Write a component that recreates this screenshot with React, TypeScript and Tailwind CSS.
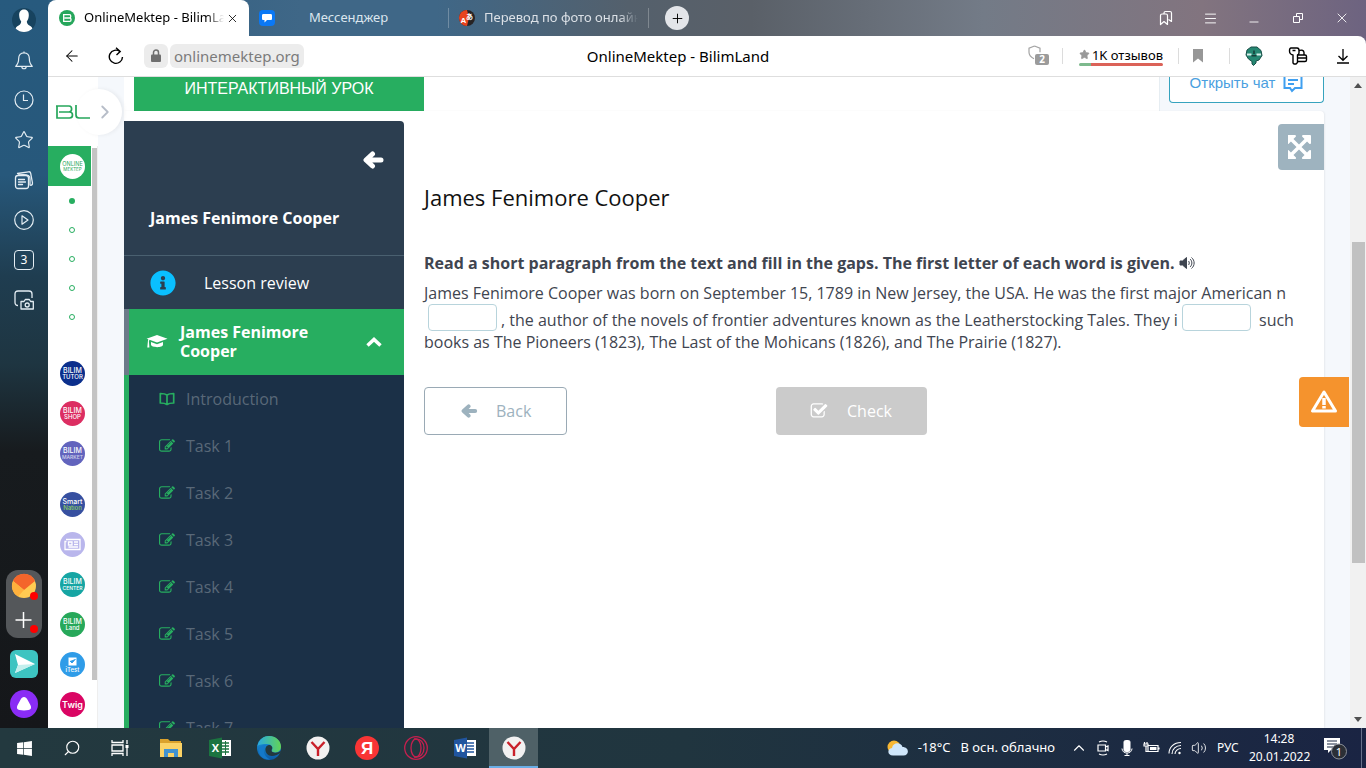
import React from "react";
import { Bell, Clock, Star, Lock, ArrowLeft, RotateCw, X, Plus, Menu, Minus, Bookmark, Search, ChevronUp, ChevronRight, Volume2 } from "lucide-react";
import { FaWindows, FaInfoCircle } from "react-icons/fa";

const SITE = "font-['Open_Sans','Liberation_Sans',sans-serif]";

const EDIT_PATH =
  "M888 1184l116-116-152-152-116 116v56h96v96h56zm440-720q-16-16-33 1l-350 350q-17 17-1 33t33-1l350-350q17-17 1-33zm80 594v190q0 119-84.5 203.5t-203.5 84.5h-832q-119 0-203.5-84.5t-84.5-203.5v-832q0-119 84.5-203.5t203.5-84.5h832q63 0 117 25 15 7 18 23 3 17-9 29l-49 49q-14 14-32 8-23-6-45-6h-832q-66 0-113 47t-47 113v832q0 66 47 113t113 47h832q66 0 113-47t47-113v-126q0-13 9-22l64-64q15-15 35-7t20 29zm-96-738l288 288-672 672h-288v-288zm444 132l-92 92-288-288 92-92q28-28 68-28t68 28l152 152q28 28 28 68t-28 68z";
const CHECK_PATH =
  "M1472 930v318q0 119-84.5 203.5t-203.5 84.5h-832q-119 0-203.5-84.5t-84.5-203.5v-832q0-119 84.5-203.5t203.5-84.5h832q63 0 117 25 15 7 18 23 3 17-9 29l-49 49q-10 10-23 10-3 0-9-2-23-6-45-6h-832q-66 0-113 47t-47 113v832q0 66 47 113t113 47h832q66 0 113-47t47-113v-254q0-13 9-22l64-64q10-10 23-10 6 0 12 3 20 8 20 29zm231-489l-814 814q-24 24-57 24t-57-24l-430-430q-24-24-24-57t24-57l110-110q24-24 57-24t57 24l263 263 647-647q24-24 57-24t57 24l110 110q24 24 24 57t-24 57z";
const EXPAND_PATH =
  "M1283 413l-355 355 355 355 144-144q29-31 70-14 39 17 39 59v448q0 26-19 45t-45 19h-448q-42 0-59-40-17-39 14-69l144-144-355-355-355 355 144 144q31 30 14 69-17 40-59 40h-448q-26 0-45-19t-19-45v-448q0-42 40-59 39-17 69 14l144 144 355-355-355-355-144 144q-19 19-45 19-12 0-24-5-40-17-40-59v-448q0-26 19-45t45-19h448q42 0 59 40 17 39-14 69l-144 144 355 355 355-355-144-144q-31-30-14-69 17-40 59-40h448q26 0 45 19t19 45v448q0 42-39 59-13 5-25 5-26 0-45-19z";

function Glyph({ d, className, box = "0 0 1792 1792" }: { d: string; className: string; box?: string }) {
  return (
    <svg viewBox={box} className={className} fill="currentColor" aria-hidden="true">
      <path d={d} />
    </svg>
  );
}

function BoldArrow({ className }: { className: string }) {
  return (
    <svg viewBox="0 0 22 18" className={className} fill="none" stroke="currentColor" strokeWidth="5" strokeLinecap="round" strokeLinejoin="round" aria-hidden="true">
      <path d="M10.500 3L4 9l6.500 6M5 9h14" />
    </svg>
  );
}

function RailButton({ label, children }: { label: string; children: React.ReactNode }) {
  return (
    <button type="button" aria-label={label} className="flex h-10 w-12 shrink-0 items-center justify-center">
      {children}
    </button>
  );
}

function DesktopRail() {
  const line = "size-5 text-[#e4edf3]";
  return (
    <nav aria-label="Browser panel" className="flex w-12 shrink-0 flex-col items-center text-white">
      <RailButton label="Profile">
        <svg viewBox="0 0 24 24" className="size-6">
          <circle cx="12" cy="12" r="12" fill="#17435f" />
          <path d="M12 1.500c3.300 0 5 2.500 4.800 6-.1 2.500-.9 4.500-2 6 .2 2 .8 3 2.600 3.900 2 .9 2.700 1.800 2.900 3.300C18 22.700 15 24 12 24s-6-1.300-8.300-3.300c.2-1.500.9-2.400 2.900-3.300 1.800-.9 2.400-1.900 2.600-3.900-1.100-1.500-1.900-3.500-2-6-.2-3.500 1.500-6 4.800-6z" fill="#fff" />
        </svg>
      </RailButton>
      <RailButton label="Notifications">
        <svg viewBox="0 0 20 20" className={line} fill="none" stroke="currentColor" strokeWidth="1.200" strokeLinejoin="round">
          <path d="M10 1.500v1.300M10 2.800c-3.500 0-5.300 2.400-5.300 5.500 0 4.500-1 6-3 8h16.600c-2-2-3-3.500-3-8 0-3.100-1.800-5.500-5.300-5.500zM7.800 16.500c0 3 4.400 3 4.400 0" />
        </svg>
      </RailButton>
      <RailButton label="History">
        <svg viewBox="0 0 20 20" className={line} fill="none" stroke="currentColor" strokeWidth="1.200">
          <circle cx="10" cy="10" r="9" /><path d="M9.500 4.500V10.500h4.500" />
        </svg>
      </RailButton>
      <RailButton label="Favourites"><Star className={line} strokeWidth={1.4} /></RailButton>
      <RailButton label="Collections">
        <svg viewBox="0 0 20 20" className={line} fill="none" stroke="currentColor" strokeWidth="1.300" strokeLinecap="round">
          <rect x="1.500" y="5.500" width="13" height="13" rx="2.500" />
          <path d="M4.500 9.500h6M4.500 12h7M4.500 14.500h4M3.500 3.500l11-1.700c1.200-.2 2 .4 2.200 1.500L18.500 13c.2 1.300-.3 2-1.500 2.300M4.500 5c5-.5 8-.3 10 .5 1.500.6 1.500 2 1.500 3.500v6" />
        </svg>
      </RailButton>
      <RailButton label="Video">
        <svg viewBox="0 0 20 20" className={line} fill="none" stroke="currentColor" strokeWidth="1.200" strokeLinejoin="round">
          <circle cx="10" cy="10" r="9.300" />
          <path d="M8 5.800v8.400l6-4.200z" />
        </svg>
      </RailButton>
      <RailButton label="Open tabs">
        <span className="flex size-5 items-center justify-center rounded border border-[#e4edf3] text-xs">3</span>
      </RailButton>
      <RailButton label="Screenshot">
        <svg viewBox="0 0 20 20" className={line} fill="none" stroke="currentColor" strokeWidth="1.300" strokeLinejoin="round">
          <path d="M4 15.500c-1.800 0-3-1-3-3V4c0-2 1-3 3-3h11c2 0 3 1 3 3v4" />
          <path d="M7 11.500h3l1.300-2h4l1.300 2H19.300V19H7z" />
          <circle cx="13.200" cy="15" r="2" />
        </svg>
      </RailButton>
      <div className="mt-auto flex flex-col items-center pb-1">
        <div className="mb-1.5 flex h-[68px] w-9 flex-col items-center justify-around rounded-xl bg-[#54575a]">
          <svg viewBox="0 0 28 28" className="size-7">
            <circle cx="14" cy="13" r="12" fill="#ffcb52" />
            <path d="M3 8A12 12 0 0 1 25 8L14 17z" fill="#f4652b" />
            <path d="M3 8l11 9-6 6.500A12 12 0 0 1 3 8z" fill="#ffb13d" />
            <circle cx="24" cy="23" r="4" fill="#f00" />
          </svg>
          <svg viewBox="0 0 28 28" className="size-7">
            <path d="M13.500 5v16M5.500 13h16" stroke="#fff" strokeWidth="1.500" />
            <circle cx="24" cy="22" r="4" fill="#f00" />
          </svg>
        </div>
        <RailButton label="Send">
          <svg viewBox="0 0 28 28" className="size-7">
            <rect width="28" height="28" rx="6" fill="#3dc4c1" />
            <path d="M5 4l20 10L5 23l3-8z" fill="#fff" />
            <path d="M8 15l17-1L5 23z" fill="#c3efed" />
          </svg>
        </RailButton>
        <RailButton label="Alice">
          <svg viewBox="0 0 28 28" className="size-7">
            <circle cx="14" cy="14" r="14" fill="#8a2cf5" />
            <path d="M14 7c1.500 0 2.500 1 3.500 2.700l3 5.500c1.300 2.500.4 4.300-2 4.800-2.500.6-6.500.6-9 0-2.400-.5-3.300-2.300-2-4.800l3-5.500C11.500 8 12.500 7 14 7z" fill="#fff" />
          </svg>
        </RailButton>
      </div>
    </nav>
  );
}

function TabBar() {
  const win = "flex w-11 items-center justify-center text-white";
  return (
    <header className="flex h-9 shrink-0 text-[13px]">
      <div className="flex w-[201px] items-center rounded-t-lg bg-white pl-[11px] pr-[9px]">
        <svg viewBox="0 0 16 16" className="size-4 shrink-0">
          <circle cx="8" cy="8" r="8" fill="#26a65b" />
          <path d="M4 4.700h6.500c1.700 0 1.700 3.300 0 3.300H5.500M4.700 4.700v6.600h6c1.800 0 1.800-3.300 0-3.300" fill="none" stroke="#fff" strokeWidth="1.300" />
        </svg>
        <span className="ml-[9px] min-w-0 flex-1 overflow-hidden whitespace-nowrap [mask-image:linear-gradient(to_right,#000_88%,transparent)]">OnlineMektep - BilimLand</span>
        <button type="button" aria-label="Close tab" className="flex w-4 justify-center"><X size={13} strokeWidth={1.5} /></button>
      </div>
      <div className="flex w-[199px] items-center pl-[10px] text-[#dbe6ee]">
        <svg viewBox="0 0 16 16" className="size-4 shrink-0">
          <rect width="16" height="16" rx="4" fill="#0a78f5" />
          <path d="M4.500 4h7c1 0 1.500.5 1.500 1.500v3c0 1-.5 1.500-1.500 1.500H8l-2.500 2.500V10h-1C3.500 10 3 9.500 3 8.500v-3C3 4.500 3.500 4 4.500 4z" fill="#fff" />
        </svg>
        <span className="flex-1 pr-[26px] text-center">Мессенджер</span>
      </div>
      <div className="my-2 flex w-[201px] items-center border-x border-white/25 pl-[10px] pr-2.5 text-[#dbe0e6]">
        <svg viewBox="0 0 16 16" className="size-4 shrink-0">
          <circle cx="8" cy="8" r="8" fill="#272324" />
          <path d="M8 0a8 8 0 0 0 0 16l2-8z" fill="#e8431f" />
          <text x="1.500" y="13" fontSize="8" fontWeight="700" fill="#fff" fontFamily="Liberation Sans">A</text>
          <text x="7" y="8.500" fontSize="7" fontWeight="700" fill="#fff" fontFamily="Noto Sans CJK JP">あ</text>
        </svg>
        <span className="ml-[9px] min-w-0 flex-1 overflow-hidden whitespace-nowrap [mask-image:linear-gradient(to_right,#000_88%,transparent)]">Перевод по фото онлайн</span>
      </div>
      <button type="button" aria-label="New tab" className="ml-4 flex size-6 items-center justify-center self-center rounded-full bg-[#e3e5e9]">
        <Plus size={15} strokeWidth={1.5} />
      </button>
      <div className="ml-auto flex pr-0.5">
        <button type="button" aria-label="Bookmarks" className={win}>
          <svg viewBox="0 0 16 16" className="size-4" fill="none" stroke="currentColor" strokeWidth="1.200" strokeLinejoin="round">
            <path d="M2.500 5.500c0-1 .5-1.500 1.500-1.500h4c1 0 1.500.5 1.500 1.500v9L6 11.500l-3.500 3zM6 4V3c0-1 .5-1.500 1.500-1.500h4.500c1 0 1.500.5 1.500 1.500v8.500l-3-2" />
          </svg>
        </button>
        <button type="button" aria-label="Menu" className={win}><Menu size={15} strokeWidth={1.5} /></button>
        <button type="button" aria-label="Minimize" className={`${win} pt-2`}><Minus size={14} strokeWidth={1.5} /></button>
        <button type="button" aria-label="Restore" className={win}>
          <svg viewBox="0 0 12 12" className="size-3" fill="none" stroke="currentColor"><path d="M1.500 4.500h6v6h-6zM4.500 4V1.500h6v6H8" /></svg>
        </button>
        <button type="button" aria-label="Close" className={win}><X size={16} strokeWidth={1.3} /></button>
      </div>
    </header>
  );
}

function Toolbar() {
  const cell = "flex w-11 items-center justify-center";
  return (
    <div className="flex h-[41px] shrink-0 items-center rounded-tr-lg border-b border-[#dedede] bg-white text-base text-black">
      <div className="flex w-[280px] shrink-0 items-center pl-0.5">
        <button type="button" aria-label="Back" className={cell}><ArrowLeft size={18} strokeWidth={1.4} /></button>
        <button type="button" aria-label="Reload" className={cell}>
          <svg viewBox="0 0 16 18" className="h-[18px] w-4" fill="none" stroke="currentColor" strokeWidth="1.400">
            <path d="M14.500 10A6.600 6.600 0 1 1 12 4.600M8 .8l4.200 3.700L8.500 8" />
          </svg>
        </button>
        <span className="ml-1.5 flex h-6 w-6 items-center justify-center rounded-md bg-[#ececec]">
          <svg viewBox="0 0 12 14" className="h-3.5 w-3"><rect x="1" y="5.500" width="10" height="7.500" rx="1" fill="#6f6f6f" /><path d="M3.500 6V3.500a2.500 2.500 0 0 1 5 0V6" fill="none" stroke="#6f6f6f" strokeWidth="1.500" /></svg>
        </span>
        <span className="ml-0.5 flex h-6 items-center rounded-md bg-[#ececec] px-1 text-[15px] text-[#7b7b7b]">onlinemektep.org</span>
      </div>
      <div className="min-w-0 flex-1 text-center text-[15px]">OnlineMektep - BilimLand</div>
      <div className="flex h-full shrink-0 items-center">
        <svg viewBox="0 0 22 22" className="mr-3 size-[22px]">
          <path d="M6.500 1l5.500 2.200v4M6.500 1L1 3.200v4c0 3 2 5 5 6.500" fill="none" stroke="#a3a3a3" strokeWidth="1.200" />
          <rect x="7" y="9" width="14" height="11" rx="2" fill="#9b9b9b" />
          <text x="14" y="18" fontSize="10" fontWeight="700" fill="#fff" textAnchor="middle" fontFamily="Open Sans">2</text>
        </svg>
        <div className="flex h-4 items-center border-l border-[#dcdcdc] pl-4 pr-[15px]">
          <div className="flex w-[84px] flex-col text-[13px] leading-4">
            <span className="flex items-center justify-center gap-0.5 whitespace-nowrap"><Star size={11} className="fill-[#999] text-[#999]" />1K отзывов</span>
            <span className="flex h-[3px] overflow-hidden rounded"><i className="w-3 bg-[#7db98d]" /><i className="flex-1 bg-[#db6258]" /></span>
          </div>
        </div>
        <div className="flex h-4 w-[52px] items-center border-x border-[#dcdcdc] pl-3">
          <svg viewBox="0 0 14 14" className="size-3.5"><path d="M2 0h10v13.500L7 9.500l-5 4z" fill="#979797" /></svg>
        </div>
        <button type="button" aria-label="Extension" className="ml-0.5 flex w-11 items-center justify-center">
          <svg viewBox="0 0 18 20" className="h-5 w-[18px]">
            <path d="M6 1h6l4 3.500 1 5-3 4.500-3 1v2l-2.500 2.500L7 18v-2.500L3.500 13 1 9l1-5z" fill="#258772" stroke="#1a4f48" />
            <path d="M2 7.500h4.500v2H2zM11.500 7.500H16v2h-4.500z" fill="#d6efe9" /><path d="M8.200 4.500h1.600V8H8.200zM6.500 9h5v1.500h-5z" fill="#173f3a" />
          </svg>
        </button>
        <button type="button" aria-label="Passwords" className={cell}>
          <svg viewBox="0 0 20 20" className="size-5" fill="none" stroke="currentColor" strokeWidth="1.400" strokeLinejoin="round">
            <path d="M3 2h6c1.500 0 2 1 2 2.500V7c0 1-.5 1.500-1.500 2v7.500L8 18H6l-1-1V9C2.500 8.500 1.500 7 1.500 5c0-2 .5-3 1.500-3zM4.500 4.500h3M11 5c1.500-1.500 5-1 5 1.500V9M9.500 9H17c1 0 1.500.5 1.500 1.500V14c0 1-.5 1.500-1.500 1.500H9.500M9.500 12H18" />
          </svg>
        </button>
        <button type="button" aria-label="Downloads" className="flex w-[46px] items-center justify-center">
          <svg viewBox="0 0 14 16" className="h-4 w-3.5" fill="none" stroke="currentColor" strokeWidth="1.300"><path d="M7 1v11M2.500 8L7 12.300 11.500 8M1 15h12" /></svg>
        </button>
      </div>
    </div>
  );
}

const services = [
  { top: "BILIM", bottom: "TUTOR", tint: "bg-[#0b2f8c]", bottomTint: "text-white" },
  { top: "BILIM", bottom: "SHOP", tint: "bg-[#dc2e62]", bottomTint: "text-white" },
  { top: "BILIM", bottom: "MARKET", tint: "bg-[#6264bd]", bottomTint: "text-white/70" },
  { top: "Smart", bottom: "Nation", tint: "bg-[#3750a0]", bottomTint: "text-[#8ed05e]" },
  { top: "", bottom: "", tint: "bg-[#b9b6ec]", bottomTint: "", icon: "news" },
  { top: "BILIM", bottom: "CENTER", tint: "bg-[#16a5a3]", bottomTint: "text-white" },
  { top: "BILIM", bottom: "Land", tint: "bg-[#27a85a]", bottomTint: "text-white" },
  { top: "", bottom: "iTest", tint: "bg-[#2f9ce8]", bottomTint: "text-white", icon: "test" },
  { top: "Twig", bottom: "", tint: "bg-[#da0563]", bottomTint: "", big: true },
];

function ServiceLink({ item }: { item: (typeof services)[number] }) {
  return (
    <a href="#service" aria-label={`${item.top} ${item.bottom}`} className="flex h-10 shrink-0 items-center justify-center pl-[5px]">
      <svg viewBox="0 0 25 25" className={`size-[25px] rounded-full ${item.tint}`} fontFamily="Inter, sans-serif" textAnchor="middle">
        {item.icon === "news" && <path d="M6 7.500h14v10H5v-8h1.500M8.500 10h3.500v3H8.500zM14 10h4M14 12.500h4M8.500 15h9.500" fill="none" stroke="#fff" strokeWidth="1.300" />}
        {item.icon === "test" && <path d="M8 5h9v9H8zM10 9l2 2 3.500-4" fill="#fff" stroke="#2f9ce8" />}
        {item.big ? (
          <text x="12.500" y="16" fontSize="9" fontWeight="600" fill="#fff">Twig</text>
        ) : (
          <>
            {item.top && <text x="12.500" y="12" fontSize="7" fontWeight="500" fill="#fff">{item.top}</text>}
            {item.bottom && <text x="12.500" y={item.icon ? 20 : 18} fontSize={item.bottom.length > 5 && item.top === "BILIM" ? 5 : 6} fontWeight="500" fill="currentColor" className={item.bottomTint}>{item.bottom}</text>}
          </>
        )}
      </svg>
    </a>
  );
}

function SiteRail() {
  return (
    <aside className="relative z-10 flex w-[50px] shrink-0 flex-col bg-white">
      <button type="button" aria-label="Expand menu" className="absolute left-7 top-3 flex size-[46px] items-center justify-end rounded-full bg-white pr-1.5 shadow-[2px_0_4px_rgba(0,0,0,0.06)]">
        <ChevronRight size={22} strokeWidth={2} className="text-[#b7bdc8]" />
      </button>
      <a href="#home" aria-label="BilimLand" className="relative flex h-[69px] shrink-0 items-center pl-2">
        <svg viewBox="0 0 34 14" className="h-3.5 w-[34px]" fill="none" stroke="#26a65b" strokeWidth="1.700">
          <path d="M0 1h13c3.500 0 3.500 6 0 6H3M1 1v12h12.500c4 0 4-6 0-6M20 0v10c0 2 1 3 3 3h11" />
        </svg>
      </a>
      <div className="flex min-h-0 flex-1 overflow-hidden">
        <div className="w-[43px] shrink-0">
          <a href="#mektep" aria-label="OnlineMektep" className="flex h-10 items-center justify-center bg-[#27ae60] pl-[5px]">
            <svg viewBox="0 0 25 25" className="size-[25px] rounded-full bg-white" fontFamily="Inter, sans-serif" textAnchor="middle" fill="#26a65b">
              <text x="12.500" y="12" fontSize="5.500">ONLINE</text>
              <text x="12.500" y="17" fontSize="4.500">MEKTEP</text>
            </svg>
          </a>
          {[0, 1, 2, 3, 4].map((n) => (
            <div key={n} className="flex h-[29px] items-center justify-center pl-[5px]">
              <span className={n === 0 ? "size-1.5 rounded-full bg-[#27ae60]" : "size-1.5 rounded-full border border-[#27ae60]"} />
            </div>
          ))}
          <div className="pt-[22px]">{services.slice(0, 3).map((s) => <ServiceLink key={s.bottom} item={s} />)}</div>
          <div className="pt-[11px]">{services.slice(3).map((s) => <ServiceLink key={s.top + s.bottom} item={s} />)}</div>
        </div>
        <div className="ml-px flex-1 border-r border-[#eee]"><div className="mt-0.5 h-[532px] w-[5px] bg-[#c4c4c4]" /></div>
      </div>
    </aside>
  );
}

function LessonMenu() {
  return (
    <nav aria-label="Lesson" className="flex w-[280px] shrink-0 flex-col self-stretch rounded-tr bg-[#2c3e50] text-base text-white">
      <div className="flex shrink-0 justify-end px-5 pt-[30px]">
        <button type="button" aria-label="Collapse"><BoldArrow className="h-[18px] w-[22px]" /></button>
      </div>
      <h2 className="mt-[38px] shrink-0 border-b border-[#4a6070] pb-[26px] pl-[26px] leading-[22px] font-bold">James Fenimore Cooper</h2>
      <a href="#review" className="flex h-[53px] shrink-0 items-center pl-[26px]">
        <FaInfoCircle className="size-[26px] text-[#0abfff]" />
        <span className="ml-7">Lesson review</span>
      </a>
      <button type="button" className="flex h-[66px] shrink-0 items-center border-l-[5px] border-[#6c7a89] bg-[#27ae60] pl-[17px] pr-[22px] text-left leading-[19px] font-bold">
        <svg viewBox="0 0 22 16" className="h-4 w-[22px] shrink-0" fill="currentColor">
          <path d="M11 1l10.500 3.700L11 8.400 3.500 5.800l-.6 1.500.5 6.200H1.300l.6-6.200.4-2L.5 4.700zM5 8l6 2.200L17 8v2.800c0 3.200-11.500 3.200-12 0z" />
        </svg>
        <span className="ml-3 flex-1">James Fenimore<br />Cooper</span>
        <svg viewBox="0 0 16 10" className="h-2.5 w-4" fill="none" stroke="currentColor" strokeWidth="3.500"><path d="M1.500 8.500L8 2.500l6.500 6" /></svg>
      </button>
      <ul className="min-h-0 flex-1 overflow-hidden border-l-[5px] border-[#27ae60] bg-[#1b3047] text-[#596878]">
        {["Introduction", "Task 1", "Task 2", "Task 3", "Task 4", "Task 5", "Task 6", "Task 7"].map((t, i) => (
          <li key={t}>
            <a href="#task" className="flex h-[47px] items-center pl-[30px]">
              {i === 0 ? (
                <svg viewBox="0 0 16 14" className="h-3.5 w-4 text-[#27ae60]" fill="none" stroke="currentColor" strokeWidth="1.700" strokeLinejoin="round">
                  <path d="M8 3C6 1.500 4 1.500 1.300 1.500v9.500C4 11 6 11 8 12.500 10 11 12 11 14.700 11V1.500C12 1.500 10 1.500 8 3zM8 3v9.500" />
                </svg>
              ) : (
                <Glyph d={EDIT_PATH} className="size-4 text-[#27ae60]" />
              )}
              <span className="ml-[11px]">{t}</span>
            </a>
          </li>
        ))}
      </ul>
    </nav>
  );
}

function Gap({ label }: { label: string }) {
  return <input type="text" aria-label={label} className="mx-1 inline-block h-[27px] w-[69px] rounded border border-[#b8d4dc] bg-white px-1 align-bottom" />;
}

function Exercise() {
  return (
    <section className="min-w-0 flex-1 pl-5 pt-[3px] text-base text-[#3f4550]">
      <div className="flex justify-end">
        <button type="button" aria-label="Full screen" className="flex size-[46px] items-center justify-center rounded-l bg-[#9eb3bf] text-white">
          <Glyph d={EXPAND_PATH} className="size-[26px]" box="64 0 1664 1536" />
        </button>
      </div>
      <h1 className="mt-[11px] text-[22px] leading-8 text-[#111]">James Fenimore Cooper</h1>
      <p className="mt-[39px] flex items-center leading-[22px] font-bold">
        Read a short paragraph from the text and fill in the gaps. The first letter of each word is given.
        <button type="button" aria-label="Listen" className="ml-1">
          <svg viewBox="0 0 16 14" className="h-3.5 w-4" fill="none" stroke="currentColor">
            <path d="M1 5h2.500L7.500 1.500v11L3.500 9H1z" fill="currentColor" />
            <path d="M9.500 5c1 1 1 3 0 4M11 3c2.500 2 2.500 6 0 8M12.500 1.500c3.500 3 3.500 8 0 11" />
          </svg>
        </button>
      </p>
      <p className="mt-2 pr-[30px] leading-[22px]">
        James Fenimore Cooper was born on September 15, 1789 in New Jersey, the USA. He was the first major American n <Gap label="Word starting with n" />, the author of the novels of frontier adventures known as the Leatherstocking Tales. They i<Gap label="Word starting with i" /> such books as The Pioneers (1823), The Last of the Mohicans (1826), and The Prairie (1827).
      </p>
      <div className="mt-[34px] flex gap-[209px]">
        <button type="button" className="flex h-12 w-[143px] items-center rounded border border-[#9aaab5] pl-[35px] text-[#9db2be]">
          <BoldArrow className="h-3.5 w-[18px]" /><span className="ml-[18px]">Back</span>
        </button>
        <button type="button" className="flex h-12 w-[151px] items-center rounded bg-[#cbcbcb] pl-[34px] text-white">
          <Glyph d={CHECK_PATH} className="size-[18px]" /><span className="ml-[19px]">Check</span>
        </button>
      </div>
    </section>
  );
}

function Page() {
  return (
    <div className={`relative flex min-h-0 flex-1 overflow-hidden bg-[#f5f8fc] ${SITE}`}>
      <SiteRail />
      <main className="ml-[26px] mr-[26px] flex min-w-0 flex-1 flex-col">
        <div className="flex h-[34px] shrink-0">
          <div className="flex-1 bg-white pl-[10px]">
            <a href="#lesson" className="flex h-full w-[290px] items-start justify-center bg-[#27ae60] pt-0.5 font-['Liberation_Sans',Arial,sans-serif] text-base leading-5 text-white">ИНТЕРАКТИВНЫЙ УРОК</a>
          </div>
          <div className="w-[165px] border-l border-[#e6edf2] pl-[9px]">
            <button type="button" className="flex h-[26px] w-[155px] items-center justify-center gap-2 rounded-b border border-t-0 border-[#36a3be] bg-white pb-3 font-['Liberation_Sans',Arial,sans-serif] text-[15px] text-[#4a9fe0]">
              Открыть чат
              <svg viewBox="0 0 20 18" className="h-[18px] w-5" fill="none" stroke="#3f9ff0" strokeWidth="2"><path d="M1.500 0v13H7l2 3 3-3h6.500V0M5 5h10M5 9h6" /></svg>
            </button>
          </div>
        </div>
        <div className="flex min-h-0 flex-1 rounded-tr bg-white pt-[10px] shadow-[1px_0_2px_rgba(0,0,0,0.06)]">
          <LessonMenu />
          <Exercise />
        </div>
      </main>
      <button type="button" aria-label="Report a problem" className="absolute right-[17px] top-[300px] flex size-[50px] items-center justify-center rounded-l bg-[#f5932d]">
        <svg viewBox="0 0 28 26" className="h-[26px] w-7" fill="none" stroke="#fff" strokeWidth="3" strokeLinejoin="round"><path d="M14 3L2.500 22h23z" /><path d="M14 9v7M14 17v2.500" strokeWidth="3.500" /></svg>
      </button>
      <div className="flex w-4 shrink-0 flex-col items-center bg-[#f1f1f1]">
        <svg viewBox="0 0 8 5" className="mt-1.5 h-[5px] w-2"><path d="M4 0l4 5H0z" fill="#505050" /></svg>
        <div className="mt-[154px] h-[321px] w-[13px] bg-[#c1c1c1]" />
        <svg viewBox="0 0 8 5" className="mt-auto mb-1.5 h-[5px] w-2"><path d="M0 0h8L4 5z" fill="#505050" /></svg>
      </div>
    </div>
  );
}

function YBrowser() {
  return (
    <svg viewBox="0 0 24 24" className="size-6">
      <circle cx="12" cy="12" r="11.500" fill="#f2f1f1" />
      <path d="M5.500 6l6.500 7 6.500-7M12 12v8" fill="none" stroke="#c9202a" strokeWidth="2.400" />
    </svg>
  );
}

function Office({ letter, dark, light }: { letter: string; dark: string; light: string }) {
  return (
    <svg viewBox="0 0 24 24" className="size-6">
      <path d="M12 4h11v16H12z" fill="#fff" />
      <path d="M14 7h7M14 10h7M14 13h7M14 16h7" stroke={light} strokeWidth="1.300" />
      {letter === "X" && <path d="M17.500 5v14" stroke={light} />}
      <path d="M1 4l13-2.500v21L1 20z" fill={dark} />
      <text x="7.500" y="16" fontSize="11" fontWeight="700" fill="#fff" textAnchor="middle" fontFamily="Open Sans">{letter}</text>
    </svg>
  );
}

function Taskbar() {
  const cell = "flex h-10 w-[49px] items-center justify-center";
  const sys = "flex h-10 w-6 items-center justify-center";
  return (
    <footer className="flex h-10 shrink-0 items-center bg-linear-to-r from-[#23393f] via-[#20353f] to-[#1a2443] text-white">
      <button type="button" aria-label="Start" className="flex h-10 w-12 items-center justify-center"><FaWindows size={17} /></button>
      <button type="button" aria-label="Search" className="flex h-10 w-12 items-center justify-center"><Search size={18} strokeWidth={1.5} className="-scale-x-100" /></button>
      <button type="button" aria-label="Task view" className="mr-0.5 flex h-10 w-12 items-center justify-center">
        <svg viewBox="0 0 18 16" className="h-4 w-[18px]" fill="none" stroke="currentColor" strokeWidth="1.300"><path d="M1 0v2.500h11V0M1 5h11v6H1zM1 16v-2.500h11V16M16 0v4M16 8v8" /><path d="M14.500 5h3v3h-3z" fill="currentColor" stroke="none" /></svg>
      </button>
      <button type="button" aria-label="Explorer" className={cell}>
        <svg viewBox="0 0 24 24" className="size-6"><path d="M1 3h8l2 2h11v4H1z" fill="#dba22c" /><path d="M1 7h22v14H1z" fill="#fbd366" /><path d="M5 13h14v8h-4v-4H9v4H5z" fill="#4293d0" /></svg>
      </button>
      <button type="button" aria-label="Excel" className={cell}><Office letter="X" dark="#1b7440" light="#1b7440" /></button>
      <button type="button" aria-label="Edge" className={cell}>
        <svg viewBox="0 0 24 24" className="size-6">
          <defs>
            <linearGradient id="edgeTop"><stop offset="0" stopColor="#2aa9e0" /><stop offset="1" stopColor="#62d456" /></linearGradient>
            <linearGradient id="edgeLow" x2="0" y2="1"><stop offset="0" stopColor="#1b9de2" /><stop offset="1" stopColor="#0c59a4" /></linearGradient>
          </defs>
          <circle cx="12" cy="12" r="12" fill="url(#edgeLow)" />
          <path d="M.5 10C2 3 7 0 12 0c7 0 12 5 12 10.500 0 4-3 6-6 6-2.500 0-4-1-3-2.500 1.500-2.500-.5-6-5-6C6 8 2 8.500.5 10z" fill="url(#edgeTop)" />
          <path d="M9 11c-2 4 1 9 6 9 3 0 5-1 7.500-2.500 1-1 1.500-2 1.500-3-2 2-5 2.500-7 2-2.500-.5-3-2-2-3.500 1-2-1-4-3-4-1.500 0-2.500 1-3 2z" fill="#23393f" />
          <path d="M10 9C5 12 6 20 13 23.500 4 24 1 17 2 13c1-3 5-5 8-4z" fill="#1479c9" />
        </svg>
      </button>
      <button type="button" aria-label="Yandex Browser" className={cell}><YBrowser /></button>
      <button type="button" aria-label="Yandex" className={cell}>
        <svg viewBox="0 0 24 24" className="size-6"><circle cx="12" cy="12" r="12" fill="#f93535" /><text x="12" y="18" fontSize="17" fontWeight="700" fill="#fff" textAnchor="middle" fontFamily="Liberation Sans">Я</text></svg>
      </button>
      <button type="button" aria-label="Opera" className={cell}>
        <svg viewBox="0 0 24 24" className="size-6" fill="none" stroke="#c5204f" strokeWidth="1.300"><circle cx="12" cy="12" r="11.300" /><ellipse cx="12" cy="12" rx="5" ry="9" /><path d="M10 3c7-1 10 4 10 9s-3 10-10 9" /></svg>
      </button>
      <button type="button" aria-label="Word" className={cell}><Office letter="W" dark="#21559f" light="#21559f" /></button>
      <button type="button" aria-label="Yandex Browser window" className="flex h-10 w-[49px] items-center justify-center border-b-2 border-[#6aaee6] bg-[#4f6167] pt-0.5"><YBrowser /></button>

      <div className="ml-auto flex items-center text-[13px]">
        <svg viewBox="0 0 22 16" className="h-4 w-[22px]"><circle cx="7" cy="7" r="6.500" fill="#f7b733" /><path d="M6 15.500c-6 0-6-7-1-7.500 1-6 9-6 10.500-1 7 0 7 8.500 1 8.500z" fill="#cfe6fa" /></svg>
        <span className="ml-[9px] whitespace-nowrap">-18°C</span>
        <span className="ml-2.5 whitespace-nowrap">В осн. облачно</span>
        <button type="button" aria-label="Hidden icons" className="ml-3 flex h-10 w-6 items-center justify-center"><ChevronUp size={18} strokeWidth={1.5} /></button>
        <span className={sys}>
          <svg viewBox="0 0 14 16" className="h-4 w-3.5" fill="none" stroke="currentColor" strokeWidth="1.200"><path d="M2 5h7.500v6H2zM9.500 7l2.500-1v4.500l-2.500-1M3 2q4-2 8 0M3 14q4 2 8 0" /></svg>
        </span>
        <span className={sys}>
          <svg viewBox="0 0 12 16" className="h-4 w-3" fill="none" stroke="currentColor"><rect x="3" y=".5" width="6" height="11" rx="1.500" fill="currentColor" /><path d="M1 8.500c0 6 10 6 10 0M6 13v2.500M3.500 15.500h5" /></svg>
        </span>
        <span className={sys}>
          <svg viewBox="0 0 17 14" className="h-3.5 w-[17px]" fill="none" stroke="currentColor" strokeWidth="1.200"><path d="M5 4.500h10v6H5zM16 6.500v2M1.500 1v2M4 1v2M1 3h4v2H1zM3 5v5.500h2" /><path d="M7 6h6.500v3H7z" fill="currentColor" stroke="none" /></svg>
        </span>
        <span className={sys}>
          <svg viewBox="0 0 14 14" className="size-3.5" fill="none" stroke="currentColor" strokeWidth="1.100"><path d="M1 12.500C1 6 6 1.500 13 1.500M4 13c0-5 4-8.500 9-8.500M7 13c0-3 3-5.500 6-5.500" /><circle cx="11.500" cy="12" r="1.200" fill="currentColor" stroke="none" /></svg>
        </span>
        <span className={sys}><Volume2 size={16} strokeWidth={1.3} /></span>
        <span className="ml-1.5 w-7 text-xs">РУС</span>
        <time className="ml-1 w-[60px] text-center text-xs leading-[18px]">14:28<br />20.01.2022</time>
        <button type="button" aria-label="Notifications" className="ml-2 flex w-9 items-center justify-center">
          <svg viewBox="0 0 24 24" className="size-6">
            <path d="M1 2h16v12H8l-3 3v-3H1z" fill="#fff" /><path d="M4 5h10M4 8h10M4 11h6" stroke="#1b2843" />
            <circle cx="16" cy="15.500" r="7.500" fill="#2b2f36" stroke="#8b9099" />
            <text x="16" y="19.500" fontSize="11" fill="#fff" textAnchor="middle" fontFamily="Noto Sans">1</text>
          </svg>
        </button>
        <span className="ml-2 mr-1 h-10 w-px bg-[#67718a]" />
      </div>
    </footer>
  );
}

export default function App() {
  return (
    <div className="flex h-screen flex-col overflow-hidden bg-[#14181b] font-['Noto_Sans','Open_Sans',sans-serif]">
      <div className="flex min-h-0 flex-1 bg-[linear-gradient(to_bottom,transparent_76px,#15191c_62%),linear-gradient(to_right,#275a7e,#3f6787_22%,#3f6787_32%,#54606c_46%,#5a6068_55%,#737b87_72%,#82747f_88%,#6d6380)]">
        <div className="flex w-12 shrink-0 bg-[linear-gradient(to_bottom,#275a7e,#27587b_24%,#1f3d50_38%,#1e3541_50%,#171b1e_62%,#15171a)]"><DesktopRail /></div>
        <div className="flex min-w-0 flex-1 flex-col">
          <TabBar />
          <Toolbar />
          <Page />
        </div>
      </div>
      <Taskbar />
    </div>
  );
}
